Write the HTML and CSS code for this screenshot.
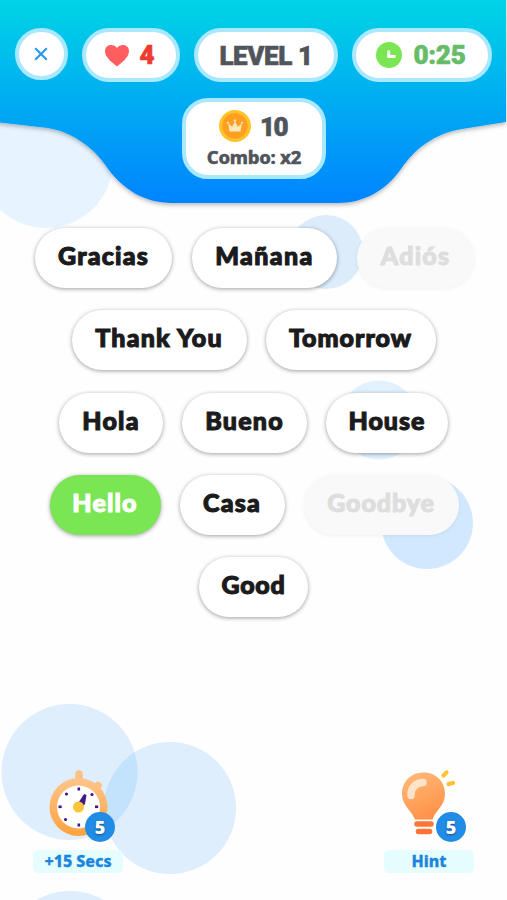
FILE: index.html
```html
<!DOCTYPE html>
<html lang="en">
<head>
<meta charset="utf-8">
<title>Word Match</title>
<link rel="stylesheet" href="styles.css">
</head>
<body>
<main class="game">
  <svg class="backdrop" viewBox="0 0 507 900" aria-hidden="true">
    <defs>
      <linearGradient id="sky" x1="0" y1="0" x2="0" y2="1">
        <stop offset="0" stop-color="#00d5e6"/>
        <stop offset="0.12" stop-color="#00cee7"/>
        <stop offset="1" stop-color="#0084ff"/>
      </linearGradient>
      <filter id="shade" x="-5%" y="-5%" width="110%" height="115%">
        <feDropShadow dx="0" dy="2" stdDeviation="2.2" flood-color="#000" flood-opacity="0.28"/>
      </filter>
      <clipPath id="left-disc"><circle cx="69.500" cy="772" r="68"/></clipPath>
    </defs>
    <circle cx="46" cy="161" r="67" fill="#e7f4ff"/>
    <circle cx="326" cy="252" r="37" fill="#dcecfb"/>
    <circle cx="379" cy="420" r="39.5" fill="#e1f1ff"/>
    <circle cx="427" cy="523" r="46" fill="#d1e8ff"/>
    <circle cx="69.500" cy="772" r="68" fill="#deeefd"/>
    <circle cx="170" cy="808" r="66" fill="#deeefd"/>
    <circle cx="170" cy="808" r="66" fill="#c3e2fb" clip-path="url(#left-disc)"/>
    <circle cx="70" cy="959" r="68" fill="#deeefd"/>
    <path class="wave" d="M-10 -10H506V122L462 129C433 134 415 149 401 169C386 190 365 203 337 203H172C144 203 122 189 106 166C93 147 72 132 48 128L0 122.500L-10 121Z" fill="url(#sky)" filter="url(#shade)"/>
  </svg>

  <header class="top">
    <div class="bar">
      <button class="chip close" aria-label="Close">
        <svg width="14" height="14" viewBox="0 0 14 14"><path d="M1.200 1.200 12.800 12.800M12.800 1.200 1.200 12.800" stroke="#2b98f0" stroke-width="2.200" fill="none"/></svg>
      </button>
      <div class="chip lives">
        <svg width="26" height="23" viewBox="0 0 26 23"><path d="M13 22.500C9.500 19.500 1 13.500 1 7.200C1 3.500 3.600 1 7 1C9.500 1 11.800 2 13 4C14.200 2 16.500 1 19 1C22.400 1 25 3.500 25 7.200C25 13.500 16.500 19.500 13 22.500Z" fill="#ff5d5f"/></svg>
        <span class="lives-count">4</span>
      </div>
      <div class="chip level"><span>LEVEL 1</span></div>
      <div class="chip timer">
        <svg width="26" height="26" viewBox="0 0 26 26"><circle cx="13" cy="13" r="13" fill="#7ae653"/><path d="M12.700 8.500V14.500H19.500" stroke="#fff" stroke-width="3" fill="none"/></svg>
        <span class="time">0:25</span>
      </div>
    </div>
    <div class="score">
      <div class="coins">
        <svg width="32" height="32" viewBox="0 0 32 32"><circle cx="16" cy="16" r="16" fill="#ffc329"/><circle cx="16" cy="16" r="12.700" fill="#ff9f22"/><path d="M10.500 21.500 9.200 13.500 13.200 16.700 16 11.300 18.800 16.700 22.800 13.500 21.500 21.500Z" fill="#ffe8b8"/><g fill="#ffe8b8"><circle cx="9" cy="12.800" r="1.100"/><circle cx="16" cy="10.800" r="1.200"/><circle cx="23" cy="12.800" r="1.100"/></g></svg>
        <span>10</span>
      </div>
      <div class="combo">Combo: x2</div>
    </div>
  </header>

  <section class="words">
    <div class="row first">
      <button class="word gracias">Gracias</button><button class="word manana">Mañana</button><button class="word adios used">Adiós</button>
    </div>
    <div class="row">
      <button class="word thanks">Thank You</button><button class="word tomorrow">Tomorrow</button>
    </div>
    <div class="row">
      <button class="word hola">Hola</button><button class="word bueno">Bueno</button><button class="word house">House</button>
    </div>
    <div class="row fourth">
      <button class="word hello picked">Hello</button><button class="word casa">Casa</button><button class="word goodbye used">Goodbye</button>
    </div>
    <div class="row">
      <button class="word good">Good</button>
    </div>
  </section>

  <footer class="boosts">
    <div class="boost">
      <div class="art">
        <svg width="90" height="71" viewBox="0 -1 90 71">
          <defs><linearGradient id="rim" x1="0" y1="0" x2="0" y2="1"><stop offset="0" stop-color="#ffc58b"/><stop offset="1" stop-color="#ffa23d"/></linearGradient></defs>
          <path d="M46 5V14M61 21 65 16.500" stroke="#ffc084" stroke-width="7.500" stroke-linecap="round"/>
          <circle cx="45.500" cy="38" r="29" fill="url(#rim)"/>
          <circle cx="45.500" cy="38" r="21.500" fill="#fff"/>
          <g fill="#43158b"><rect x="44.500" y="18.500" width="2.600" height="3"/><rect x="44.500" y="54.500" width="2.600" height="3"/><rect x="25.500" y="36.500" width="3.200" height="2.600"/><rect x="62" y="36.500" width="3.200" height="2.600"/><circle cx="33.500" cy="25" r="1.600"/><circle cx="59" cy="25.500" r="1.600"/><circle cx="32.500" cy="50.500" r="1.600"/><path d="M45 34.500 51 25 53.500 26 52 35 49 38Z"/></g>
          <circle cx="45.500" cy="38" r="5.500" fill="#ffc438"/>
        </svg>
        <span class="badge">5</span>
      </div>
      <div class="label secs">+15 Secs</div>
    </div>
    <div class="boost">
      <div class="art">
        <svg width="90" height="71" viewBox="0 -1 90 71">
          <defs><linearGradient id="glass" x1="0.200" y1="0" x2="0.600" y2="1"><stop offset="0" stop-color="#ffb978"/><stop offset="1" stop-color="#ff9147"/></linearGradient></defs>
          <path d="M31 50.500C28 42 18 37 18 25C18 12 27.500 3.500 39.500 3.500C51.500 3.500 61 12 61 25C61 37 51 42 48.500 50.500Z" fill="url(#glass)"/>
          <path d="M27 26.500C26.500 19 32 13.500 39 13.500" stroke="#ffe3c8" stroke-width="7.500" stroke-linecap="round" fill="none"/>
          <path d="M33 55H47M34.500 62.500H45.500" stroke="#ff7435" stroke-width="5.500" stroke-linecap="round"/>
          <path d="M59.500 6.500 62.500 3.500M64.500 15 69 14" stroke="#ffc132" stroke-width="4.200" stroke-linecap="round"/>
        </svg>
        <span class="badge">5</span>
      </div>
      <div class="label hint">Hint</div>
    </div>
  </footer>
</main>
</body>
</html>
```
FILE: styles.css
```css
* { box-sizing: border-box; }

body {
  margin: 0;
  background: #fefefe;
  font-family: Lato, "Liberation Sans", sans-serif;
}

button {
  border: 0;
  padding: 0;
  font: inherit;
}

.game {
  position: relative;
  width: 507px;
  height: 900px;
  overflow: hidden;
  display: flex;
  flex-direction: column;
}

.backdrop {
  position: absolute;
  inset: 0;
  width: 507px;
  height: 900px;
}

.top, .words, .boosts { position: relative; }

.top {
  height: 228px;
  padding: 28px 0 0 15px;
}

.bar {
  display: flex;
  gap: 14px;
  font-family: Roboto, "Open Sans", sans-serif;
  font-weight: 900;
  font-size: 26px;
  line-height: 30px;
  color: #50555b;
  -webkit-text-stroke: 0.6px currentColor;
}

.chip {
  height: 54px;
  display: flex;
  align-items: center;
  justify-content: center;
  border: 4px solid #a9e8ff;
  border-radius: 27px;
  background: #fff;
  white-space: nowrap;
}

.close { width: 53px; height: 52px; padding-right: 1px; }
.lives { width: 98px; gap: 9px; padding-right: 3px; }
.level { width: 144px; }
.timer { width: 140px; gap: 11px; padding-right: 2px; }
.lives-count { color: #ee3a31; }
.level span { letter-spacing: -0.4px; padding-top: 1px; }
.time { color: #65bd69; letter-spacing: -0.2px; }

.score {
  width: 144px;
  height: 81px;
  margin: 16px 0 0 167px;
  padding-top: 7px;
  border: 4px solid #a9e8ff;
  border-radius: 26px;
  background: #fff;
  color: #50555b;
  text-align: center;
}

.coins {
  display: flex;
  align-items: center;
  justify-content: center;
  gap: 9px;
  padding-right: 2px;
  font: 900 26px/32px Roboto, sans-serif;
  letter-spacing: -1.500px;
  -webkit-text-stroke: 0.6px currentColor;
}

.coins span { padding-top: 2px; }

.combo {
  font: 800 18.500px/26px "Noto Sans", sans-serif;
  letter-spacing: -0.3px;
  -webkit-text-stroke: 0.4px currentColor;
  white-space: nowrap;
  margin-top: 1px;
}

.words {
  display: flex;
  flex-direction: column;
  gap: 22.300px;
}

.row {
  display: flex;
  justify-content: center;
  gap: 19px;
}

.first { gap: 20px; padding-left: 2px; }
.fourth { padding-left: 1px; }

.word {
  height: 60px;
  padding-bottom: 6px;
  border-radius: 30px;
  background: #fff;
  box-shadow: 0 1px 4px rgba(0, 0, 0, 0.38);
  color: #1b1b1d;
  font-size: 25px;
  font-weight: 900;
  letter-spacing: 1.200px;
  -webkit-text-stroke: 1.100px currentColor;
  white-space: nowrap;
}

.gracias { width: 137px; }
.manana { width: 145px; letter-spacing: 1.400px; }
.adios { width: 117px; }
.thanks { width: 175px; }
.tomorrow { width: 170px; letter-spacing: 1px; }
.hola { width: 104px; }
.bueno { width: 125px; }
.house { width: 122px; letter-spacing: 1px; }
.hello { width: 111px; }
.casa { width: 105px; }
.goodbye { width: 155px; letter-spacing: 0.900px; }
.good { width: 109px; letter-spacing: 0.700px; }

.picked { background: #7ae653; color: #fff; }

.used {
  background: #f9f9f9;
  color: #dedede;
  box-shadow: 0 1px 4px rgba(0, 0, 0, 0.06);
}

.boosts {
  display: flex;
  justify-content: space-between;
  margin-top: 151px;
  padding: 0 33px;
}

.boost { width: 90px; }
.art { position: relative; height: 82px; }
.art svg { display: block; }

.badge {
  position: absolute;
  left: 52px;
  top: 44px;
  width: 30px;
  height: 30px;
  border-radius: 50%;
  background: #218ce6;
  color: #fff;
  font: 900 18px/30px "Noto Sans", sans-serif;
  text-align: center;
  text-shadow: 0 1px 2px #174e83;
}

.label {
  height: 23px;
  border-radius: 5px;
  background: #e5fdff;
  color: #1b85dd;
  font: 800 16px/22px "Noto Sans", sans-serif;
  -webkit-text-stroke: 0.3px currentColor;
  text-align: center;
  white-space: nowrap;
}
```
